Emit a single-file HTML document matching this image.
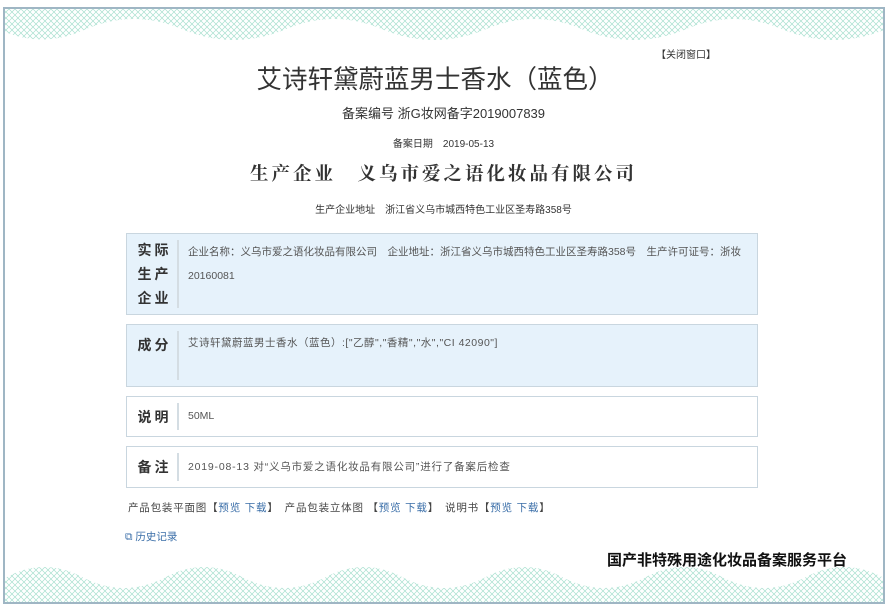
<!DOCTYPE html>
<html><head><meta charset="utf-8"><style>
*{margin:0;padding:0;box-sizing:border-box}
body{width:887px;height:608px;background:#fff;position:relative;overflow:hidden;font-family:"Liberation Sans","Noto Sans CJK SC",sans-serif;color:#333}
.a{position:absolute;white-space:nowrap}
.frame{position:absolute;left:3px;top:7px;width:882px;height:597px;border:2px solid #9fb6c4}
.box{position:absolute;left:126px;width:632px;border:1px solid #c9d6df}
.lab{position:absolute;left:0;top:0;bottom:0;width:52px;font-weight:bold;font-size:14px;color:#333;text-align:center;display:flex;align-items:center;justify-content:center;line-height:24px;letter-spacing:3px;padding-left:3px}
.div{position:absolute;left:50px;top:6px;bottom:6px;border-left:2px solid #d4dde3}
.txt{position:absolute;left:61px;top:10px;right:10px;font-size:10.5px;color:#555;line-height:24px}
.blue{background:#e6f2fb}
.lnk{color:#3a6ea8}
</style></head><body>
<svg class="a" style="left:0;top:0" width="887" height="608">
<defs>
<pattern id="p" width="6" height="6" patternUnits="userSpaceOnUse"><path d="M0 6L6 0M0 0L6 6" stroke="#a8dfcf" stroke-width="0.7"/></pattern>
</defs>
<path d="M5 9 H884 V30 Q834 50 784 30 Q734 8 684 30 Q634 50 584 30 Q534 8 484 30 Q434 50 384 30 Q334 8 284 30 Q234 50 184 30 Q134 8 84 30 Q44 48 5 32 Z" fill="url(#p)"/>
<path d="M5 602 H884 V578 Q844 556 804 578 Q764 598 724 578 Q684 556 644 578 Q604 598 564 578 Q524 556 484 578 Q444 598 404 578 Q364 556 324 578 Q284 598 244 578 Q204 556 164 578 Q124 598 84 578 Q44 556 5 578 Z" fill="url(#p)"/>
</svg>
<div class="frame"></div>
<div class="a" style="left:656px;top:46px;font-size:10px;color:#333">【关闭窗口】</div>
<div class="a" style="left:0;width:870px;text-align:center;top:59px;font-size:25.5px;color:#333">艾诗轩黛蔚蓝男士香水（蓝色）</div>
<div class="a" style="left:0;width:887px;text-align:center;top:103px;font-size:13px;color:#333">备案编号 浙G妆网备字2019007839</div>
<div class="a" style="left:0;width:887px;text-align:center;top:135px;font-size:10px;color:#333">备案日期　2019-05-13</div>
<div class="a" style="left:0;width:887px;text-align:center;top:160px;font-size:18.5px;font-weight:bold;letter-spacing:3px;color:#333;font-family:'Liberation Serif','Noto Serif CJK SC',serif">生产企业　义乌市爱之语化妆品有限公司</div>
<div class="a" style="left:0;width:887px;text-align:center;top:201px;font-size:10px;color:#333">生产企业地址　浙江省义乌市城西特色工业区圣寿路358号</div>

<div class="box blue" style="top:233px;height:82px"><div class="lab">实际<br>生产<br>企业</div><div class="div"></div><div class="txt" style="top:6px;white-space:normal">企业名称：义乌市爱之语化妆品有限公司　企业地址：浙江省义乌市城西特色工业区圣寿路358号　生产许可证号：浙妆20160081</div></div>
<div class="box blue" style="top:324px;height:63px"><div class="lab" style="align-items:flex-start;padding-top:8px">成分</div><div class="div"></div><div class="txt" style="top:6px;letter-spacing:0.5px">艾诗轩黛蔚蓝男士香水（蓝色）:["乙醇","香精","水","CI 42090"]</div></div>
<div class="box" style="top:396px;height:41px"><div class="lab">说明</div><div class="div"></div><div class="txt" style="top:7px">50ML</div></div>
<div class="box" style="top:446px;height:42px"><div class="lab">备注</div><div class="div"></div><div class="txt" style="top:8px;letter-spacing:0.8px">2019-08-13 对“义乌市爱之语化妆品有限公司”进行了备案后检查</div></div>

<div class="a" style="left:128px;top:500px;font-size:10.5px;letter-spacing:0.8px;color:#444">产品包装平面图【<span class="lnk">预览 下载</span>】　产品包装立体图 【<span class="lnk">预览 下载</span>】　说明书【<span class="lnk">预览 下载</span>】</div>
<div class="a" style="left:125px;top:529px;font-size:10.5px;color:#3a6ea8">⧉ 历史记录</div>
<div class="a" style="left:607px;top:549px;font-size:15px;font-weight:bold;color:#111">国产非特殊用途化妆品备案服务平台</div>
</body></html>
